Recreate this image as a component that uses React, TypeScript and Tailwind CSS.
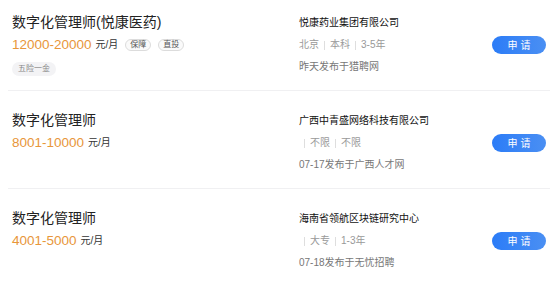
const FONT = "font-['Liberation_Sans','Noto_Sans_CJK_SC',sans-serif]"

type Job = {
  title: string
  salary: string
  badges: string[]
  perks: string[]
  company: string
  meta: string[]
  posted: string
}

const jobs: Job[] = [
  {
    title: '数字化管理师(悦康医药)',
    salary: '12000-20000',
    badges: ['保障', '直投'],
    perks: ['五险一金'],
    company: '悦康药业集团有限公司',
    meta: ['北京', '本科', '3-5年'],
    posted: '昨天发布于猎聘网',
  },
  {
    title: '数字化管理师',
    salary: '8001-10000',
    badges: [],
    perks: [],
    company: '广西中青盛网络科技有限公司',
    meta: ['', '不限', '不限'],
    posted: '07-17发布于广西人才网',
  },
  {
    title: '数字化管理师',
    salary: '4001-5000',
    badges: [],
    perks: [],
    company: '海南省领航区块链研究中心',
    meta: ['', '大专', '1-3年'],
    posted: '07-18发布于无忧招聘',
  },
]

export default function App() {
  return (
    <div className={`h-[285px] w-[550px] overflow-hidden bg-white ${FONT}`}>
      <div className="-mt-[7px]">
        {jobs.map((j, i) => (
          <JobRow key={i} job={j} />
        ))}
      </div>
    </div>
  )
}

function JobRow({ job }: { job: Job }) {
  return (
    <div className="ml-2 flex h-[98px] border-b border-[#f0f0f2] pl-1 pr-1 pt-[19px]">
      <div className="w-[287px] shrink-0">
        <h3 className="text-[14px] leading-[20px] text-[#222]">{job.title}</h3>
        <div className="mt-[3px] flex items-center leading-[20px]">
          <span className="text-[13.5px] text-[#e8963a]">{job.salary}</span>
          <span className="ml-1 text-[10px] text-[#333]">元/月</span>
          {job.badges.map((b) => (
            <span
              key={b}
              className="ml-[7px] flex h-[12px] w-[26px] items-center justify-center rounded-full border border-[#dcdcdc] bg-[#fafafa] text-[8px] leading-none text-[#555]"
            >
              {b}
            </span>
          ))}
        </div>
        {job.perks.length > 0 && (
          <div className="mt-[7px] flex gap-1">
            {job.perks.map((p) => (
              <span
                key={p}
                className="flex h-[14px] items-center rounded-full bg-[#f3f3f5] px-[6px] text-[8px] leading-none text-[#888]"
              >
                {p}
              </span>
            ))}
          </div>
        )}
      </div>

      <div className="flex h-[66px] flex-1 items-center justify-between">
        <div className="text-[10px] leading-[22px]">
          <p className="text-[#111]">{job.company}</p>
          <p className="flex items-center text-[#999]">
            {job.meta.map((m, k) => (
              <span key={k} className="flex items-center">
                {k > 0 && <span className="mx-[5px] h-[9px] w-px bg-[#dedede]" />}
                {m}
              </span>
            ))}
          </p>
          <p className="text-[#777]">{job.posted}</p>
        </div>
        <button className="flex h-[18px] w-[54px] items-center justify-center rounded-full bg-gradient-to-r from-[#2b7cf7] to-[#4a8ff3] indent-[3px] text-[10px] tracking-[3px] text-white">
          申请
        </button>
      </div>
    </div>
  )
}
